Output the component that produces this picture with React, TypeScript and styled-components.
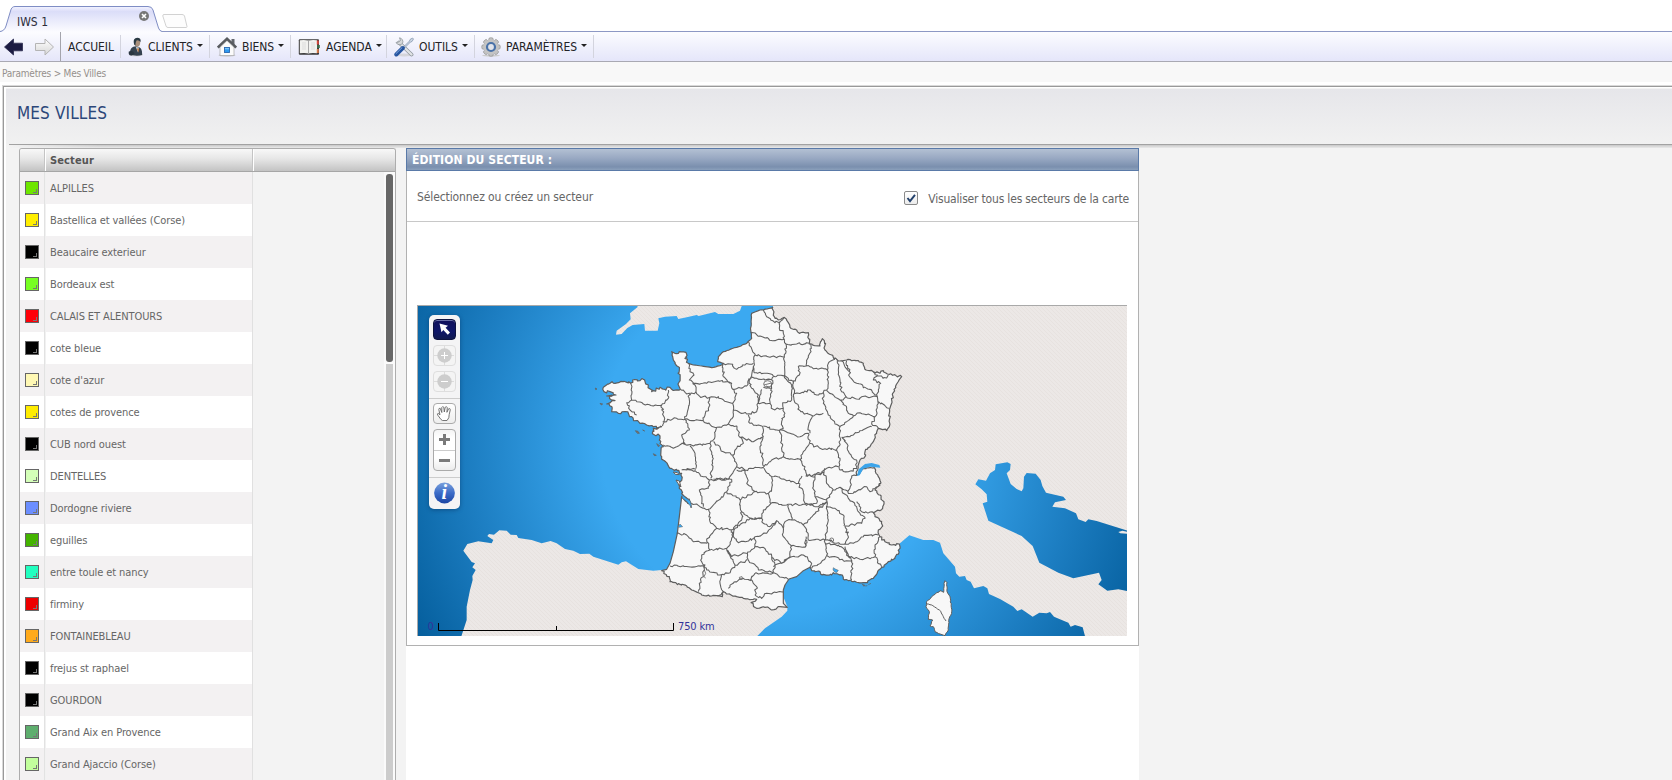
import React from "react";
import styled, { createGlobalStyle } from "styled-components";

const GlobalStyle = createGlobalStyle`
  html, body { margin: 0; padding: 0; background: #fff; overflow: hidden; }
  * { box-sizing: border-box; }
  body { font-family: "DejaVu Sans Condensed", "DejaVu Sans", Tahoma, sans-serif; font-stretch: condensed; }
`;

/* ---------- shell ---------- */

const Page = styled.div`
  width: 100%;
  height: 780px;
  display: flex;
  flex-direction: column;
  overflow: hidden;
`;

const TabStrip = styled.div`
  height: 31px;
  flex: none;
  display: flex;
  position: relative;
  z-index: 1;
`;

const Tab = styled.div`
  position: relative;
  width: 162px;
  height: 32px;
  padding: 14px 0 0 17px;
  font-size: 12px;
  line-height: 16px;
  color: #2d2d3a;
`;

const TabShape = styled.svg`
  position: absolute;
  left: 0;
  top: 0;
  z-index: -1;
`;

const NewTab = styled.svg`
  width: 28px;
  height: 16px;
  margin-top: 13px;
`;

const Toolbar = styled.nav`
  height: 31px;
  flex: none;
  display: flex;
  align-items: stretch;
  border-top: 1px solid #8d98c4;
  border-bottom: 1px solid #a9a9b3;
  background: linear-gradient(#fcfcff, #f0f1fc 50%, #e5e6fa);
`;

const History = styled.div`
  width: 61px;
  display: flex;
  align-items: center;
  gap: 11px;
  padding-left: 4px;
  border-right: 1px solid #a4a4ac;
`;

const MenuItem = styled.div<{ $width: number }>`
  width: ${(p) => p.$width}px;
  display: flex;
  align-items: center;
  gap: 5px;
  padding-left: 7px;
  font-size: 12px;
  letter-spacing: -0.03px;
  color: #222226;
  white-space: nowrap;
  background: linear-gradient(#d3d4de, #d3d4de) right 3px / 1px 23px no-repeat;
  &:last-child { padding-left: 6px; }
  svg { flex: none; }
`;

const Caret = styled.i`
  width: 0;
  height: 0;
  margin: -3px 0 0 -1px;
  border: 3px solid transparent;
  border-top: 3px solid #222;
  border-bottom: 0;
`;

const Breadcrumb = styled.div`
  height: 20px;
  flex: none;
  padding: 5px 0 0 2px;
  background: #f8f8f8;
  font-size: 10px;
  line-height: 13px;
  letter-spacing: -0.22px;
  color: #95908c;
`;

const Frame = styled.main`
  flex: 1;
  min-height: 0;
  margin: 3px 0 0 2px;
  display: flex;
  flex-direction: column;
  border: 1px solid #d9d9d9;
  border-right: 0;
  border-bottom: 0;
  background: #f3f3f3;
  box-shadow: inset 1px 1px 0 #999, inset 3px 2px 0 #fff;
  padding: 3px 0 0 3px;
`;

const TitleBar = styled.header`
  height: 55px;
  flex: none;
  padding: 13px 0 0 11px;
  background: linear-gradient(#e6e6ea, #f1f1f1);
  font-size: 17px;
  line-height: 22px;
  letter-spacing: 0.13px;
  color: #2c4779;
`;

const TitleRule = styled.div`
  height: 4px;
  flex: none;
  margin-left: 3px;
  border-top: 1px solid #a2a2a2;
  background: linear-gradient(90deg, #f2f2f2, rgba(242, 242, 242, 0) 90px), linear-gradient(#c8c8c8, #eaeaea);
`;

const Workspace = styled.div`
  flex: 1;
  min-height: 0;
  display: flex;
  align-items: stretch;
  padding-left: 13px;
  gap: 10px;
`;

/* ---------- sector list ---------- */

const SectorTable = styled.section`
  width: 377px;
  display: flex;
  flex-direction: column;
  border: 1px solid #adadad;
  border-bottom: 0;
  border-radius: 3px 3px 0 0;
  overflow: hidden;
`;

const TableHead = styled.div`
  height: 23px;
  flex: none;
  display: grid;
  grid-template-columns: 26px 208px 1fr;
  border-bottom: 1px solid #a6a6a6;
  background: linear-gradient(#f8f8f8, #e6e6e6 45%, #c3c3c3);
`;

const HeadCell = styled.div`
  padding: 2px 0 0 4px;
  font-size: 11px;
  line-height: 20px;
  font-weight: bold;
  letter-spacing: 0.12px;
  color: #555;
  border-right: 1px solid #fff;
  box-shadow: inset -1px 0 0 #c4c4c4;
  &:last-child { border: 0; box-shadow: none; }
`;

const TableBody = styled.div`
  flex: 1;
  min-height: 0;
  display: flex;
  justify-content: space-between;
`;

const Rows = styled.div`
  width: 233px;
  overflow: hidden;
  border-right: 1px solid #e0e0e0;
`;

const Row = styled.div<{ $shade: boolean }>`
  height: 32px;
  display: grid;
  grid-template-columns: 26px 1fr;
  background: ${(p) => (p.$shade ? "#f3f1f2" : "#fff")};
`;

const SwatchCell = styled.div`
  padding: 9px 0 0 5px;
  border-right: 1px solid #f1f1f1;
  box-shadow: inset -1px 0 0 #e2e2e2;
`;

const Swatch = styled.div<{ $color: string }>`
  width: 14px;
  height: 14px;
  border: 1px solid #666;
  background: ${(p) => p.$color};
  display: flex;
  align-items: flex-end;
  justify-content: flex-end;
  padding: 1px;
  &::after {
    content: "";
    width: 3px;
    height: 3px;
    border-right: 1px solid #777;
    border-bottom: 1px solid #777;
  }
`;

const SectorName = styled.div`
  padding: 2px 0 0 4px;
  font-size: 11px;
  line-height: 30px;
  letter-spacing: -0.1px;
  color: #666;
  white-space: nowrap;
`;

const ScrollRail = styled.div`
  width: 11px;
  padding: 2px 2px 0 0;
  border-left: 2px solid #fafafa;
  display: flex;
  flex-direction: column;
  gap: 2px;
  background: #fbfbfb;
`;

const Thumb = styled.div`
  height: 188px;
  flex: none;
  border-radius: 3px;
  background: #676767;
`;

const Track = styled.div`
  flex: 1;
  background: #ccc;
`;

/* ---------- editor ---------- */

const Editor = styled.section`
  width: 733px;
  background: #fff;
`;

const EditorTitle = styled.h2`
  height: 23px;
  margin: 0;
  padding: 1px 0 0 5px;
  border: 1px solid #5a7aa8;
  background: linear-gradient(#b3c0d3, #98a8c2 45%, #7a8fae 85%, #8ba0bb);
  font-size: 12px;
  line-height: 20px;
  font-weight: bold;
  letter-spacing: 0.1px;
  color: #fff;
`;

const EditorBody = styled.div`
  border: 1px solid #b1b1b1;
  border-top: 0;
  height: 475px;
`;

const Options = styled.div`
  height: 51px;
  display: flex;
  justify-content: space-between;
  padding: 0 9px 0 10px;
  border-bottom: 1px solid #c8c8c8;
  font-size: 12px;
  letter-spacing: -0.1px;
  color: #666;
`;

const Hint = styled.span`
  line-height: 52px;
`;

const CheckLabel = styled.label`
  display: flex;
  align-items: center;
  gap: 10px;
  padding-top: 6px;
  letter-spacing: -0.18px;
`;

const CheckBox = styled.span`
  width: 14px;
  height: 14px;
  margin-top: -3px;
  border: 1px solid #8a8a8a;
  border-radius: 2px;
  background: linear-gradient(#fff, #ececec);
  svg { display: block; }
`;

const MapBox = styled.div`
  position: relative;
  width: 710px;
  height: 331px;
  margin: 83px 0 0 10px;
  border-top: 1px solid #a9a9a9;
  border-left: 1px solid #a9a9a9;
`;

const MapLayer = styled.svg`
  position: absolute;
  left: 0;
  top: 0;
  display: block;
`;

const ToolBox = styled.div`
  position: absolute;
  left: 11px;
  top: 9px;
  width: 31px;
  height: 194px;
  padding: 4px 0;
  display: flex;
  flex-direction: column;
  align-items: center;
  border-radius: 5px;
  background: #f4f4f5;
  box-shadow: 0 1px 4px rgba(0, 30, 70, 0.4);
`;

const ToolButton = styled.div<{ $kind?: "active" | "off" }>`
  width: 23px;
  height: 21px;
  flex: none;
  margin-bottom: 5px;
  border-radius: 4px;
  border: 1px solid ${(p) => (p.$kind === "active" ? "#0d1340" : p.$kind === "off" ? "#dedede" : "#aaa")};
  background: ${(p) =>
    p.$kind === "active" ? "linear-gradient(#10105c, #0e1668 60%, #101a50)" : p.$kind === "off" ? "#f4f4f4" : "linear-gradient(#fff, #eee)"};
  box-shadow: ${(p) => (p.$kind === "active" ? "inset 0 1px 0 #6a70a8" : "none")};
  svg { display: block; }
`;

const ToolRule = styled.div`
  width: 31px;
  height: 1px;
  flex: none;
  margin: 1px 0 4px;
  background: #ccc;
`;

const ZoomPair = styled.div`
  width: 23px;
  height: 42px;
  flex: none;
  margin-bottom: 5px;
  border: 1px solid #aaa;
  border-radius: 4px;
  background: linear-gradient(#f4f4f4, #fff 20%, #fff 70%, #ececec);
  svg { display: block; }
`;

/* ---------- map geometry ---------- */

type Offset = [number, number];

const NORTH: Offset = [0, 0];
const COAST: Offset = [0, 540];
const SOUTH: Offset = [210, 420];
const ITALY: Offset = [930, 390];
const SPAIN: Offset = [-540, 600];

const points = (text: string, [dx, dy]: Offset): Offset[] =>
  text.trim().split(/\s+/).map((pair) => {
    const [x, y] = pair.split(",").map(Number);
    return [x + dx, y + dy];
  });

const toPath = (list: Offset[]) => "M" + list.map(([x, y]) => `${x.toFixed(1)} ${y.toFixed(1)}`).join("L");

/* Adds small deterministic bends along a polyline, so borders look surveyed rather than ruled. */
const rough = (list: Offset[], amount: number, seed: number): Offset[] => {
  let state = seed * 7919 + 17;
  const next = () => {
    state = (state * 1103515245 + 12345) % 2147483648;
    return state / 2147483648 - 0.5;
  };
  const out: Offset[] = [list[0]];
  for (let i = 1; i < list.length; i++) {
    const [x0, y0] = list[i - 1];
    const [x1, y1] = list[i];
    const n = Math.max(1, Math.round(Math.hypot(x1 - x0, y1 - y0) / 6));
    for (let k = 1; k < n; k++) {
      out.push([x0 + ((x1 - x0) * k) / n + next() * amount, y0 + ((y1 - y0) * k) / n + next() * amount]);
    }
    out.push([x1, y1]);
  }
  return out;
};

const eastBorder = points(
  "548,22 553,50 565,60 583,52 595,68 600,82 620,90 628,100 655,98 658,132 690,138 697,116 703,122 705,150 725,165 742,180 770,180 785,182 805,182 820,190 828,210 850,215 870,220 880,212 892,222 935,230 912,268 905,310 898,340 898,380 890,392 865,385 860,400 850,425 825,455 825,470 808,485 803,510 800,526 808,522 820,506 853,503 858,520 865,530 872,550 866,558",
  NORTH
);
const alpsAndRiviera = points(
  "870,15 855,30 870,45 882,65 878,85 850,98 855,110 875,125 878,138 865,150 870,170 885,185 905,195 928,192 930,205 915,235 895,245 875,262 858,285 850,295 825,308 790,305 782,300 760,298 757,285 730,278 725,285 697,285 690,275 665,272 660,262",
  COAST
);
const lionGulf = points("640,272 620,290 597,297 585,315 580,330 580,370 592,382", COAST);
const pyrenees = points(
  "570,380 545,390 525,382 500,385 483,368 500,358 460,355 440,350 415,342 400,335 397,350 365,348 343,347 325,338 305,330 290,318 240,305 238,290 215,272",
  COAST
);
const landes = points("230,268 240,250 250,215 262,160 268,110 275,50", COAST);
const westCoast = points(
  "285,602 303,622 300,605 275,580 268,560 270,545 275,520 262,512 240,505 232,490 215,470 213,450 220,440 208,420 210,408 187,400 190,385 215,380 190,380 170,375 150,370 140,362 125,350 105,335 85,340 65,335 65,320 50,312 75,302 50,288 78,285 60,275 42,275 40,262 60,250 85,248 100,245 122,250 128,240 150,242 160,238 175,255 185,275 210,262 225,268 240,262 245,268 270,268 265,250 268,210 250,180 245,155 265,160 288,157 290,172 285,175 295,190",
  NORTH
);
const channelCoast = points(
  "310,195 335,198 365,203 395,195 400,190 383,185 385,170 400,155 440,142 470,130 485,115 482,90 485,40 510,30 520,30 548,22",
  NORTH
);

const france =
  toPath([
    ...rough(eastBorder, 6, 1),
    ...rough(alpsAndRiviera, 6, 2),
    ...lionGulf,
    ...rough(pyrenees, 6, 3),
    ...landes,
    ...rough(westCoast, 9, 4),
    ...rough(channelCoast, 2, 5),
  ]) + "Z";

const northBorders = [
  "520,30 530,50 555,68 570,65 568,85 580,100 583,118 560,120 548,122 535,115 510,108 482,98",
  "570,65 583,52",
  "583,118 588,132 620,132 658,130",
  "475,125 495,165 520,168 540,172 570,168 583,172",
  "588,132 583,172 583,228",
  "495,165 490,200 492,218",
  "400,190 420,192 440,208 465,195 490,190",
  "492,218 530,220 550,228 583,228",
  "658,130 663,155 650,185 648,198",
  "648,198 625,200 628,225 610,250 595,235 583,228",
  "648,198 680,205 712,210 715,190 735,178",
  "712,210 715,250 710,270",
  "610,250 613,280 640,278 660,270 680,285 700,278 710,270",
  "742,182 745,210 750,240 755,275 768,290",
  "755,182 765,200 778,215 780,232",
  "770,182 778,215",
  "780,232 800,250 830,265 860,285",
  "850,215 862,225 850,240 872,250 860,285 862,290",
  "860,228 890,234 895,225",
  "768,290 800,297 830,290 862,290",
  "862,290 865,310 855,350",
  "865,305 898,325",
  "710,270 730,285 750,300 768,290",
  "750,300 770,325 775,340 790,348",
  "790,348 810,338 835,342 855,350",
  "845,380 810,392 780,410 755,412",
  "750,380 770,365 790,348",
  "855,350 845,372 865,385",
  "700,278 700,310 715,345 735,372 750,380",
  "613,280 612,300 632,335 668,347 700,340",
  "668,347 655,380 660,400",
  "655,400 658,430 690,445 740,448 752,420 750,380",
  "755,412 770,430 778,460 800,480 800,508",
  "740,448 750,475 750,510 775,515 800,505",
  "490,200 485,225 478,240",
  "480,232 500,235 525,240 545,240 550,230",
  "478,240 485,265 505,285 505,308",
  "515,268 510,285 505,310 540,310 545,265 520,262",
  "548,240 545,265",
  "583,228 605,255 605,300 578,308 580,325 550,328 540,310",
  "400,190 400,230 425,250 428,268 470,258 478,235",
  "310,250 345,248 385,242 425,250",
  "295,190 300,215 312,225 298,240 315,255 318,275 300,285 270,268",
  "318,275 330,290 360,292 385,290 410,305 428,310",
  "428,268 440,280 428,310",
  "428,310 430,330 470,342 500,335 505,308",
  "298,285 295,325 285,358",
  "360,292 355,325 340,362",
  "235,270 235,295 215,315 222,350 218,378",
  "122,250 125,300 110,308 120,330 140,345",
  "125,300 160,312 190,318 215,315",
  "218,365 260,355 285,358 340,362",
  "285,358 298,390 275,405 285,430 260,440 250,445 220,435",
  "340,362 380,382 415,372 430,350 430,330",
  "275,430 310,438 360,430 375,410 380,382",
  "415,372 440,378 450,412 490,425 520,410 518,380 480,370 475,345",
  "520,378 560,390 580,385 575,365 582,345 580,325",
  "370,425 400,455 430,465 440,445 460,430 450,412",
  "570,388 600,400 630,410 655,400",
  "518,410 510,440 520,480 522,500",
  "570,388 575,420 580,470",
  "522,500 545,480 580,470 610,478 630,478 640,455 658,432",
  "630,478 645,500 648,528 670,525 695,520 710,505 745,500",
  "430,465 440,500 465,510 495,502 522,503",
  "440,500 430,515 418,535 370,538",
  "300,438 315,460 318,505",
  "360,430 368,490 362,535",
  "275,510 300,508 318,508",
];

const southBorders = [
  "75,90 105,92 130,110 148,120",
  "148,120 145,145 118,150 122,165 130,200",
  "148,120 180,118 215,118",
  "215,118 200,155 165,190 145,208",
  "75,170 95,190 120,200 145,208 148,215",
  "230,90 255,92",
  "255,92 255,100 265,135 285,155",
  "200,155 240,180 285,155 325,160 333,190",
  "312,85 335,110 335,145 325,160",
  "240,180 245,215 275,235 305,235 310,210 333,190",
  "335,110 345,108 380,122 415,130 430,160 435,190",
  "333,190 380,195 435,192",
  "426,108 415,130",
  "440,105 465,112 460,140 465,165 470,190 435,192",
  "465,112 470,100 492,98 500,130 520,150 500,180 465,170",
  "495,85 492,98",
  "520,150 540,142 565,160 572,130 575,108 590,105",
  "540,142 565,175 590,200 600,220 615,235 605,250 555,258",
  "565,160 600,150 620,140 630,155 650,140",
  "590,185 605,215 640,218",
  "500,180 500,200 525,205 550,225 552,258",
  "385,195 395,240 415,245 430,255 460,225 500,185",
  "435,192 475,200 500,185",
  "305,235 310,250 330,260 350,242 370,265 375,245 395,240",
  "430,255 440,270 445,300 495,300",
  "500,200 505,240 495,300",
  "370,265 370,290 395,318 435,322 438,290",
  "285,290 320,280 350,242",
  "395,318 390,350 365,370 340,355 310,322 285,320 285,290",
  "305,235 270,235 225,265 220,290 235,308 285,295",
  "148,215 150,245 170,265 220,268 245,240 245,215",
  "170,265 140,300 150,330 200,325 218,290 215,268",
  "50,280 80,285 100,305 142,310",
  "30,378 85,380 135,375 125,365 125,345 150,330",
  "200,330 225,375 205,400 180,405 140,390 130,375",
  "200,325 215,350 270,335 285,318",
  "262,340 265,360 300,390 340,395 345,375 335,350",
  "225,375 262,360",
  "135,375 130,410 118,430 115,455",
  "185,405 180,430 190,455 172,468",
  "205,445 225,425 250,415 275,420 290,440 285,465",
  "265,420 285,400 345,400 385,418",
  "285,465 305,475 320,460 370,455",
  "340,380 365,370 395,350 430,345 455,370 452,385",
  "435,322 440,300",
  "495,300 500,345 485,365 455,385",
  "495,310 535,315 555,335 575,365 550,362 500,345",
  "495,300 555,312 565,290 555,258",
  "555,312 580,310 610,290 655,285",
  "555,320 565,350 600,358 645,350 645,320 660,290",
  "575,360 575,420",
  "645,350 665,380",
];

const departements = [
  ...northBorders.map((b, i) => toPath(rough(points(b, NORTH), 7, i + 10))),
  ...southBorders.map((b, i) => toPath(rough(points(b, SOUTH), 7, i + 90))),
].join("");

const seaWest =
  toPath([
    ...points("-520,10 549,10 548,100 600,600 235,812", NORTH),
    ...points(
      "755,210 730,212 685,207 648,184 635,187 625,194 550,170 538,161 510,162 490,152 465,147 440,130 422,123 395,130 365,120 325,114 320,105 302,104 290,92 268,91 252,104 237,102 232,108 250,120 245,130 205,124 172,132 160,152 185,186 195,190 187,202 197,210 187,228 188,240 180,270 170,320 170,360 153,412 20,412",
      SPAIN
    ),
  ]) + "Z";

const seaSouth =
  toPath([
    ...points("500,470 525,445 575,410 592,392 592,380 560,300 700,230 900,225 930,190 958,166 1000,180 1030,180 1050,188 1060,220 1095,260", COAST),
    ...points(
      "168,430 178,440 195,438 200,450 212,455 222,475 250,468 262,475 267,492 300,507 340,530 352,543 365,538 398,560 418,548 440,550 450,546 462,560 505,578 512,590 525,585 548,592 556,622",
      ITALY
    ),
  ]) + "Z";

const adriatic =
  toPath(
    points(
      "226,163 235,148 258,152 270,130 285,120 287,103 322,97 332,102 330,120 320,130 332,162 350,177 365,184 370,175 372,140 380,129 407,131 422,150 427,168 438,188 490,200 498,210 465,217 457,230 495,235 528,250 535,268 557,276 565,268 590,273 685,303 685,484 655,478 622,482 595,463 605,450 597,428 520,445 475,428 418,398 398,348 365,318 265,272 248,220 262,215 260,193 245,178",
      ITALY
    )
  ) + "Z";

const england =
  "M145 10L142 22L120 40L122 58L108 72L80 92L78 104L95 102L112 84L128 75L163 72L165 92L203 92L208 70L205 55L225 50L260 48L265 57L290 52L320 45L326 48L375 36L385 42L430 42L450 32L458 10Z";

const corsica =
  toPath(
    rough(
      points(
        "135,452 141,458 141,485 150,500 155,545 146,572 145,600 135,617 105,605 100,590 90,588 98,570 85,568 88,545 78,530 80,515 95,500 120,482 131,487 132,460 135,452",
        ITALY
      ),
      3,
      200
    )
  ) + "Z";
const corsicaBorder = toPath(rough(points("80,522 95,525 118,540 130,560 138,573", ITALY), 3, 201));

const MapDrawing = () => (
  <MapLayer width="709" height="330" viewBox="-516 18 2127 990">
    <defs>
      <radialGradient id="sea" gradientUnits="userSpaceOnUse" cx="545" cy="430" r="1220">
        <stop offset="0" stopColor="#3ba9f1" />
        <stop offset="0.42" stopColor="#3ba9f1" />
        <stop offset="0.75" stopColor="#1c7dc1" />
        <stop offset="1" stopColor="#045d9b" />
      </radialGradient>
      <pattern id="land" width="12" height="12" patternUnits="userSpaceOnUse">
        <rect width="12" height="12" fill="#ece8e6" />
        <path d="M0 0L12 12M-3 9L3 15M9 -3L15 3" stroke="#e7e2df" strokeWidth="3" />
      </pattern>
    </defs>
    <rect x="-516" y="18" width="2127" height="990" fill="url(#land)" />
    <path d={seaWest} fill="url(#sea)" />
    <path d={seaSouth} fill="url(#sea)" />
    <path d={adriatic} fill="url(#sea)" />
    <path d="M1585 696l12 -4l14 3v6l-20 -1z" fill="#ece7e5" />
    <path d={england} fill="url(#land)" />
    <path d={france} fill="#f8f8f8" stroke="#5e5e5e" strokeWidth="3.6" strokeLinejoin="round" />
    <path d={departements} fill="none" stroke="#606060" strokeWidth="3.2" strokeLinejoin="round" />
    <g fill="none" stroke="#666" strokeWidth="2.6">
      <ellipse cx="533" cy="252" rx="12" ry="10" />
      <path d="M522 255l22 -6M528 258l12 4" />
      <circle cx="725" cy="720" r="6" />
      <path d="M343 810l4 10l-5 10l5 4M448 832l8 -2l2 6l-8 2z" />
    </g>
    <g fill="#777" stroke="#5e5e5e" strokeWidth="2">
      <path d="M16 264l5 3l-4 2zM30 310l8 2l-4 3zM136 392l8 2l4 6l-6 0zM158 390l6 3zM190 461l9 5l-6 1zM200 431l9 6l-4 3z" />
      <path d="M817 853l8 3l-3 3zM835 854l8 -4M826 858l6 -1" />
    </g>
    <g fill="#f8f8f8" stroke="#5e5e5e" strokeWidth="3">
      <path d="M250 516l12 2l6 6l-12 -1zM258 540l10 3l4 14l-8 -6z" />
      <path d={corsica} />
      <path d={corsicaBorder} fill="none" />
    </g>
    <g fill="url(#sea)" stroke="#5e5e5e" strokeWidth="1.5">
      <path d="M276 584l12 10l13 9l4 20l-8 -10l-8 -10l-12 -8z" />
      <path d="M264 680l6 -8l8 8l-10 2z" />
      <path d="M730 803l6 4l9 4l-5 7l-6 -2l-5 -6z" />
    </g>
    <path d="M801 528L806 508L825 492L845 489L868 495L871 503L840 500L820 506L809 526Z" fill="#3ba4ea" />
  </MapLayer>
);

/* ---------- icons ---------- */

const ArrowIcon = ({ ghost }: { ghost?: boolean }) => (
  <svg width="20" height="18" viewBox="0 0 20 18">
    <defs>
      <linearGradient id="ghostFill" x1="0" y1="0" x2="0" y2="1">
        <stop offset="0" stopColor="#fff" />
        <stop offset="1" stopColor="#d6d6d6" />
      </linearGradient>
    </defs>
    {ghost ? (
      <path d="M.5 5.500H10V1L18.500 9L10 17V12.500H.5Z" fill="url(#ghostFill)" stroke="#b4b4b4" strokeLinejoin="round" />
    ) : (
      <path d="M18.500 5.200H9.500V1L.5 9L9.500 17V12.800H18.500Z" fill="#1b1b42" stroke="#2b2b4e" strokeWidth=".8" strokeLinejoin="round" />
    )}
  </svg>
);

const ClientIcon = () => (
  <svg width="15" height="20" viewBox="0 0 15 20">
    <ellipse cx="8" cy="17.500" rx="7" ry="1.800" fill="#bbb" opacity=".7" />
    <path d="M2 17.500C1.500 12 4 9.500 8 9.300C12.500 9.500 14.500 12.500 14 18Q8 19.500 2 17.500Z" fill="#35424f" />
    <path d="M.8 14.500Q0 19 4 18.500L6.500 16.500Q5 13 .8 14.500Z" fill="#2a3640" />
    <path d="M7.800 10L10 15.500L11 10.500Z" fill="#cfd8de" />
    <path d="M9 11.500L10.800 11.500L10.300 15.500Z" fill="#d06a1e" />
    <ellipse cx="9.200" cy="5.500" rx="3" ry="4" fill="#a88f7c" />
    <path d="M5.800 6Q5 1 9.200 .8Q13.200 .8 12.600 5Q11 3 8.500 3.400Q7.500 5 7.500 8.500Q6 8 5.800 6Z" fill="#2b3a44" />
  </svg>
);

const HomeIcon = () => (
  <svg width="20" height="20" viewBox="0 0 20 20">
    <ellipse cx="10" cy="18.300" rx="8.500" ry="1.500" fill="#bbb" opacity=".7" />
    <path d="M3 10L10 3.500L17 10V18.500H3Z" fill="#fbfbfb" stroke="#a8a8a8" strokeWidth=".7" />
    <path d="M14.500 2H17.500V8L14.500 5.500Z" fill="#62666c" />
    <path d="M.8 10.500L10 1.800L19.200 10.500" fill="none" stroke="#585b5f" strokeWidth="2.600" />
    <path d="M3.500 10L10 4L16.500 10" fill="none" stroke="#d5d5d5" strokeWidth=".8" />
    <rect x="7.500" y="10.500" width="5" height="5" fill="#2f9af0" stroke="#2a68b0" strokeWidth=".9" />
    <path d="M8 11h4v1.300H8z" fill="#7cc6fa" />
  </svg>
);

const AgendaIcon = () => (
  <svg width="23" height="18" viewBox="0 0 23 18">
    <rect x=".8" y="1.300" width="20.200" height="15.400" rx="1" fill="#3a3a3a" />
    <path d="M1.800 2.200Q7 1.600 10.500 2.500Q14 1.600 19 2.200V15.300Q14 14.600 10.500 15.500Q7 14.600 1.800 15.300Z" fill="#f2f2ef" />
    <path d="M10.500 2.600V15.500" stroke="#a8a8a8" />
    <path d="M4 5h4M4 7h4M4 9h4M4 11h4M13 5h4M13 7h4M13 9h4M13 11h4" stroke="#d6d6d6" strokeWidth=".7" />
    <rect x="18.800" y="2.500" width="2" height="4" fill="#d8483c" />
    <rect x="19" y="7" width="2.800" height="3" fill="#3c6a4a" />
    <rect x="18.800" y="11" width="2" height="4" fill="#d87848" />
  </svg>
);

const ToolsIcon = () => (
  <svg width="20" height="20" viewBox="0 0 20 20">
    <ellipse cx="10" cy="18" rx="9.500" ry="1.500" fill="#ccc" opacity=".7" />
    <path d="M5 5.500L17.500 17.500" stroke="#8e959c" strokeWidth="3.800" strokeLinecap="round" />
    <path d="M5 5.500L17.500 17.500" stroke="#e1e4e6" strokeWidth="2.400" strokeLinecap="round" />
    <path d="M2 5.500A4 4 0 0 0 8.500 6.500A4 4 0 0 0 5.500 .8L6.500 3.500L4.500 5Z" fill="#d5d8da" stroke="#8e959c" strokeWidth=".8" />
    <path d="M9.500 10L15.500 4L16 2.500L18.500 1L19.500 2L18 4.500L16.500 5L10.500 11Z" fill="#cdd8e5" stroke="#7b8ea8" strokeWidth=".7" />
    <path d="M2.300 17.500L8.800 11" stroke="#2554a0" strokeWidth="4" strokeLinecap="round" />
    <path d="M2 16.600L8 10.700" stroke="#7ba4dc" strokeWidth="1" strokeLinecap="round" />
  </svg>
);

const GearIcon = () => (
  <svg width="20" height="20" viewBox="0 0 20 20">
    <ellipse cx="10" cy="18.500" rx="9" ry="1.200" fill="#ccc" />
    {[0, 45, 90, 135].map((a) => (
      <rect key={a} x="7.800" y=".8" width="4.400" height="18.400" rx="1.400" fill="#c2c2c2" stroke="#8d8d8d" strokeWidth=".6" transform={`rotate(${a} 10 10)`} />
    ))}
    <circle cx="10" cy="10" r="7.400" fill="#c4c4c4" />
    <circle cx="10" cy="10" r="4" fill="#e2e4ea" stroke="#4a72a8" strokeWidth="2.200" />
  </svg>
);

const TARGET = "M11.500 0V19M0 9.500H21";

const menu = [
  { label: "ACCUEIL", width: 60, icon: null },
  { label: "CLIENTS", width: 89, icon: <ClientIcon /> },
  { label: "BIENS", width: 81, icon: <HomeIcon /> },
  { label: "AGENDA", width: 96, icon: <AgendaIcon /> },
  { label: "OUTILS", width: 88, icon: <ToolsIcon /> },
  { label: "PARAMÈTRES", width: 119, icon: <GearIcon /> },
];

const sectors: [string, string][] = [
  ["ALPILLES", "#6ee600"],
  ["Bastellica et vallées (Corse)", "#ffee00"],
  ["Beaucaire exterieur", "#000"],
  ["Bordeaux est", "#77ff22"],
  ["CALAIS ET ALENTOURS", "#ff0008"],
  ["cote bleue", "#000"],
  ["cote d'azur", "#fff8b4"],
  ["cotes de provence", "#ffec00"],
  ["CUB nord ouest", "#000"],
  ["DENTELLES", "#d4ffb8"],
  ["Dordogne riviere", "#6c8eff"],
  ["eguilles", "#44b400"],
  ["entre toule et nancy", "#22ffc0"],
  ["firminy", "#ee0000"],
  ["FONTAINEBLEAU", "#ffaa1c"],
  ["frejus st raphael", "#000"],
  ["GOURDON", "#000"],
  ["Grand Aix en Provence", "#5eae6e"],
  ["Grand Ajaccio (Corse)", "#c2ff9c"],
];

export default function App() {
  return (
    <Page>
      <GlobalStyle />
      <TabStrip>
        <Tab>
          <TabShape width="162" height="32" viewBox="0 0 162 32">
            <defs>
              <linearGradient id="tabFill" x1="0" y1="0" x2="0" y2="1">
                <stop offset="0" stopColor="#f3f3ff" />
                <stop offset=".2" stopColor="#dbddf8" />
                <stop offset="1" stopColor="#fcfcff" />
              </linearGradient>
            </defs>
            <path d="M0 31.500Q4.500 31 6 26L10.500 11Q11.500 6.500 15 6.500H148Q152 6.500 153 10L158.500 28Q159.500 31 162 31.500V32H0Z" fill="url(#tabFill)" />
            <path d="M0 31.500Q4.500 31 6 26L10.500 11Q11.500 6.500 15 6.500H148Q152 6.500 153 10L158.500 28Q159.500 31 162 31.500" fill="none" stroke="#7f8dc4" />
            <circle cx="144" cy="16" r="5" fill="#777" />
            <path d="M142 14l4 4M146 14l-4 4" stroke="#fff" strokeWidth="1.600" />
          </TabShape>
          IWS 1
        </Tab>
        <NewTab viewBox="0 0 28 16">
          <path d="M2 1.500H20Q22 1.500 22.500 3L25 13.500Q25 14.500 24 14.500H6Q4.500 14.500 4 13L.8 3Q.6 1.500 2 1.500Z" fill="#fdfdfd" stroke="#d2d2d2" />
        </NewTab>
      </TabStrip>

      <Toolbar>
        <History>
          <ArrowIcon />
          <ArrowIcon ghost />
        </History>
        {menu.map((m) => (
          <MenuItem key={m.label} $width={m.width}>
            {m.icon}
            {m.label}
            {m.icon && <Caret />}
          </MenuItem>
        ))}
      </Toolbar>

      <Breadcrumb>Paramètres &gt; Mes Villes</Breadcrumb>

      <Frame>
        <TitleBar>MES VILLES</TitleBar>
        <TitleRule />
        <Workspace>
          <SectorTable>
            <TableHead>
              <HeadCell />
              <HeadCell>Secteur</HeadCell>
              <HeadCell />
            </TableHead>
            <TableBody>
              <Rows>
                {sectors.map(([name, color], i) => (
                  <Row key={name} $shade={i % 2 === 0}>
                    <SwatchCell>
                      <Swatch $color={color} />
                    </SwatchCell>
                    <SectorName>{name}</SectorName>
                  </Row>
                ))}
              </Rows>
              <ScrollRail>
                <Thumb />
                <Track />
              </ScrollRail>
            </TableBody>
          </SectorTable>

          <Editor>
            <EditorTitle>ÉDITION DU SECTEUR :</EditorTitle>
            <EditorBody>
              <Options>
                <Hint>Sélectionnez ou créez un secteur</Hint>
                <CheckLabel>
                  <CheckBox>
                    <svg width="12" height="12" viewBox="0 0 12 12">
                      <path d="M2.500 6L5 9.200L10 2.800" fill="none" stroke="#23416c" strokeWidth="1.900" />
                    </svg>
                  </CheckBox>
                  Visualiser tous les secteurs de la carte
                </CheckLabel>
              </Options>
              <MapBox>
                <MapDrawing />
                <MapLayer width="709" height="330" viewBox="0 0 709 330">
                  <path d="M20.500 317V324.500H255.500V317M138.500 324V320" fill="none" stroke="#000" />
                  <g fill="#33339a" fontSize="11">
                    <text x="9.500" y="323.500">0</text>
                    <text x="260" y="323.500" letterSpacing="-.15">750 km</text>
                  </g>
                </MapLayer>
                <ToolBox>
                  <ToolButton $kind="active">
                    <svg width="21" height="19" viewBox="0 0 21 19">
                      <path d="M5.500 3.500L14 5.800L11.600 7.700L16 12.500L13.800 14.700L9.300 10L7.500 12.200Z" fill="#fff" />
                    </svg>
                  </ToolButton>
                  <ToolButton $kind="off">
                    <svg width="21" height="19" viewBox="0 0 21 19">
                      <path d={TARGET} stroke="#dcdcdc" transform="translate(-1 0)" />
                      <circle cx="10.500" cy="9.500" r="7.200" fill="#cdcdcd" />
                      <path d="M7 9.500h7M10.500 6v7" stroke="#fff" />
                    </svg>
                  </ToolButton>
                  <ToolButton $kind="off">
                    <svg width="21" height="19" viewBox="0 0 21 19">
                      <path d={TARGET} stroke="#dcdcdc" transform="translate(-1 0)" />
                      <circle cx="10.500" cy="9.500" r="7.200" fill="#cdcdcd" />
                      <path d="M7 9.500h7" stroke="#fff" />
                    </svg>
                  </ToolButton>
                  <ToolRule />
                  <ToolButton>
                    <svg width="21" height="19" viewBox="0 0 21 19">
                      <path
                        d="M7 15.500L3.800 11.200Q2.800 9.500 4.200 9.300L6 10.800L4.800 5.500Q4.800 4 6.200 4.300L7.800 8.500L7.800 3.500Q8.500 1.800 9.800 3.300L10.300 8L11.200 3.300Q12.200 2 13.300 3.500L12.900 8.300L14.600 4.800Q16.200 4 16.300 5.700L15.200 10.500Q15.500 14 13 16.500H8.500Z"
                        fill="#fff"
                        stroke="#666"
                        strokeWidth=".9"
                        strokeLinejoin="round"
                      />
                    </svg>
                  </ToolButton>
                  <ZoomPair>
                    <svg width="21" height="40" viewBox="0 0 21 40">
                      <path d="M5 9.500H16M10.500 4V15M5 30.500H16" stroke="#7a7a7a" strokeWidth="3" />
                      <path d="M0 20.500H21" stroke="#ccc" />
                    </svg>
                  </ZoomPair>
                  <ToolRule />
                  <svg width="23" height="22" viewBox="0 0 23 22">
                    <defs>
                      <linearGradient id="info" x1="0" y1="0" x2="0" y2="1">
                        <stop offset="0" stopColor="#7aa0dc" />
                        <stop offset=".5" stopColor="#3c6cc8" />
                        <stop offset="1" stopColor="#1c46a4" />
                      </linearGradient>
                    </defs>
                    <circle cx="11.500" cy="11" r="10.400" fill="url(#info)" />
                    <text x="11.200" y="17" textAnchor="middle" fontFamily="'Liberation Serif', serif" fontStyle="italic" fontWeight="bold" fontSize="20" fill="#fff">
                      i
                    </text>
                  </svg>
                </ToolBox>
              </MapBox>
            </EditorBody>
          </Editor>
        </Workspace>
      </Frame>
    </Page>
  );
}
